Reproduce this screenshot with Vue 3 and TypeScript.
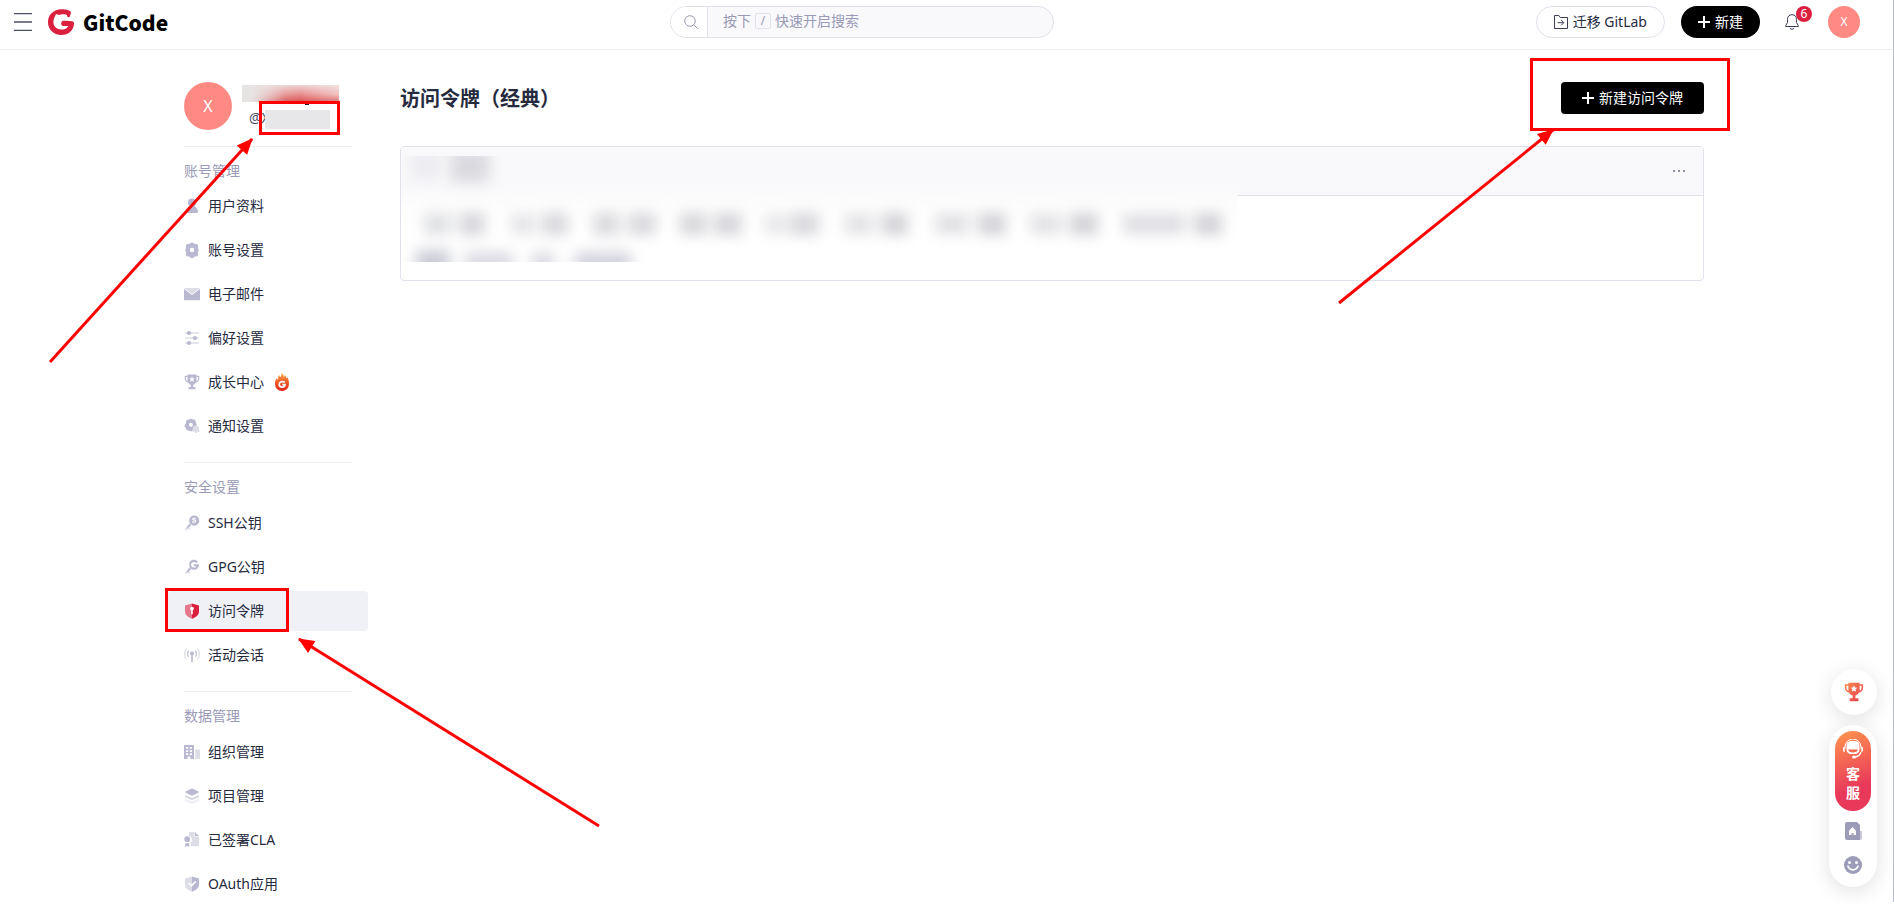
<script setup lang="ts">
import { ref } from 'vue'

interface Shape {
  d: string
  fill: string
}
interface NavItem {
  label: string
  icon: string
  active?: boolean
  hot?: boolean
}
interface NavGroup {
  title: string
  items: NavItem[]
}

const base = '#b8b8d0'
const soft = '#dddde8'

const dot = (cx: number, cy: number, r: number): string =>
  `M${cx - r} ${cy}a${r} ${r} 0 1 0 ${2 * r} 0a${r} ${r} 0 1 0 ${-2 * r} 0z`

const icons: Record<string, Shape[]> = {
  user: [
    { fill: base, d: dot(8, 4.5, 4) },
    { fill: base, d: 'M5.5 7.5h5c.3 1.6 3.6 2.600 3.600 6.100 0 .800-.5 1.400-1.300 1.400H3.200c-.8 0-1.300-.6-1.300-1.400 0-3.500 3.300-4.500 3.600-6.100z' },
  ],
  gear: [
    { fill: base, d: `M5.900 1.400C7 .100 9 .100 10.100 1.400l.5.600 1.500.1c1.500.2 2.400 1.700 2 3.200l-.3 1 .8 1.200c.3.600.3 1 0 1.600l-.8 1.200.3 1c.4 1.500-.5 3-2 3.200l-1.500.1-.5.600c-1.100 1.300-3.100 1.300-4.200 0l-.5-.600-1.500-.1c-1.500-.2-2.400-1.700-2-3.200l.3-1-.8-1.200c-.3-.600-.3-1 0-1.600l.8-1.200-.3-1c-.4-1.500.5-3 2-3.200l1.500-.1z${dot(8, 8, 2.3)}` },
  ],
  mail: [
    { fill: base, d: 'M0 3l8 6 8-6v10.500a.8.8 0 0 1-.8.8H.8a.8.8 0 0 1-.8-.8z' },
    { fill: soft, d: 'M.8 2h14.400c.4 0 .6.200.6.500L8 8.200.200 2.500C.200 2.200.4 2 .8 2z' },
  ],
  sliders: [
    { fill: soft, d: 'M1 2.200h14v1.600H1zM1 7.200h14v1.600H1zM1 12.200h14v1.600H1z' },
    { fill: base, d: dot(5, 3, 2.1) + dot(11, 8, 2.1) + dot(5, 13, 2.1) },
  ],
  cup: [
    { fill: base, d: 'M3.500.5h9v1.300h2.800v2.600c0 2.300-1.400 3.700-3.300 4-.7 1.300-1.700 2-2.900 2.300v2.200h2.400v2.400h-7v-2.400h2.400v-2.200C5.700 10.400 4.700 9.700 4 8.400 2.100 8.100.700 6.700.700 4.400V1.800h2.800zM1.900 3v1.400c0 1.300.5 2.200 1.600 2.500V3zM14.100 3v1.400c0 1.300-.5 2.200-1.600 2.500V3zM8 2.600l-.8 1.700-1.900.2 1.400 1.300-.4 1.900L8 6.800l1.700.9-.4-1.900 1.400-1.300-1.900-.2z' },
  ],
  notify: [
    { fill: base, d: `M5 1.500l1.500-.8h1l1.500.8 1.500-.1 1.300 2 .1 1.500 1 1.300-.5 1.500-3 1.200-1 4.400H6l-1-.9H3.500L2 11.500l.1-1.400L.600 8.900v-2l1.300-1.300V3.500L3.200 1.700z${dot(6.900, 6.800, 2)}` },
    { fill: soft, d: 'M12 7.500c2.100 0 3 1.500 3 3.200v1.600l.8 1.500H13.300a1.300 1.300 0 0 1-2.600 0H8.300l.8-1.500v-1.600c0-1.700.8-3.200 2.900-3.200z' },
  ],
  ssh: [
    { fill: base, d: `${dot(10.200, 5.600, 5.100)}M11.900 3.100c-1.600-.8-3.800-.4-3.700 1.100.1 1.700 2.900 1 2.900 2 0 .6-1.600.6-2.700-.1l-.4 1.100c1.700 1 4.300.7 4.300-1.100 0-1.900-2.900-1.200-2.900-2 0-.5 1.200-.5 2.100 0z` },
    { fill: base, d: 'M5.400 8.600l1.700 1.700-3.600 3.600-1.100-1.100z' },
    { fill: soft, d: 'M2.500 12.300l1.300 1.300-1.800 1.800-1.400-1.200zM4.800 12l1.600 1.500-1.300 1.300-1.500-1.500z' },
  ],
  gpg: [
    { fill: base, d: 'M13.900 2.700l-1.500 1.400C10 1.700 6.600 3.600 7.100 6.200c.5 2.600 4.200 3.200 5.500 1H9.800V5.300h5.100c.4 7.400-9.800 7.200-9.700.3C5.200.500 11-.8 13.900 2.700z' },
    { fill: base, d: 'M5.400 8.600l1.700 1.700-3.600 3.600-1.100-1.100z' },
    { fill: soft, d: 'M2.500 12.300l1.300 1.300-1.800 1.800-1.400-1.200zM4.800 12l1.600 1.500-1.300 1.300-1.500-1.500z' },
  ],
  token: [
    { fill: '#e6788c', d: 'M8 .4L1 2.600v6c0 3.400 3.300 5.900 7 7.200z' },
    { fill: '#d9203f', d: 'M8 .4l7 2.200v6c0 3.400-3.300 5.900-7 7.200z' },
    { fill: '#ffffff', d: dot(8, 5.6, 1.9) },
    { fill: '#ffffff', d: 'M7.200 6h1.600v5.300H7.200z' },
  ],
  signal: [
    { fill: base, d: dot(8, 6.5, 2) },
    { fill: base, d: 'M7.200 7h1.600v8.200H7.200z' },
    { fill: base, d: 'M4.300 3.200l.8.7c-1.300 1.500-1.300 4.200 0 5.700l-.8.7C2.600 8.300 2.600 5.200 4.300 3.200zM11.700 3.200l-.8.7c1.300 1.500 1.300 4.200 0 5.700l.8.7c1.700-2 1.700-5.100 0-7.100z' },
    { fill: soft, d: 'M2.100 1.400l.9.700C.800 4.500.800 9.500 3 11.900l-.9.700c-2.700-3-2.700-8.200 0-11.200zM13.900 1.400l-.9.700c2.200 2.400 2.200 7.400 0 9.800l.9.700c2.700-3 2.700-8.200 0-11.200z' },
  ],
  building: [
    { fill: base, d: 'M.8 1h8.400a.8.8 0 0 1 .8.8V15H6.500v-2.500h-3V15H0V1.800A.8.8 0 0 1 .8 1zM2 3v1.800h2.200V3zM5.800 3v1.800H8V3zM2 6.200V8h2.200V6.200zM5.800 6.200V8H8V6.200zM2 9.300v1.700h2.200V9.300zM5.800 9.300v1.700H8V9.300z' },
    { fill: soft, d: 'M11.200 5.500h4a.8.8 0 0 1 .8.8V15h-4.800z' },
  ],
  layers: [
    { fill: base, d: 'M8 .4l6.600 3c.5.2.5.8 0 1L8 7.700l-6.600-3.300c-.5-.2-.5-.8 0-1z' },
    { fill: '#cfcfe0', d: 'M1 7.200L8 10.300l7-3.100v1.700L8 12.100 1 8.900z' },
    { fill: '#e9e9f1', d: 'M1 10.800L8 13.900l7-3.100v1.700L8 15.700 1 12.500z' },
  ],
  cla: [
    { fill: soft, d: 'M5.500 0h5v4.800H15v8.700c0 .4-.3.700-.7.700H6.500V11A4 4 0 0 0 4.800 4z' },
    { fill: base, d: `M11 0l4 4.300h-4z${dot(3.200, 7.200, 2.900)}` },
    { fill: base, d: 'M1.200 11.200h4v3.900l-2-1.100-2 1.100z' },
  ],
  oauth: [
    { fill: soft, d: 'M8 .4L1 2.600v6c0 3.400 3.300 5.900 7 7.200z' },
    { fill: base, d: 'M8 .4l7 2.200v6c0 3.400-3.300 5.900-7 7.200z' },
    { fill: '#ffffff', d: 'M4.200 7.500l1.100-1.100 2.200 2.200 3.600-3.700 1.200 1.100-4.800 4.900z' },
  ],
}

const groups: NavGroup[] = [
  {
    title: '账号管理',
    items: [
      { label: '用户资料', icon: 'user' },
      { label: '账号设置', icon: 'gear' },
      { label: '电子邮件', icon: 'mail' },
      { label: '偏好设置', icon: 'sliders' },
      { label: '成长中心', icon: 'cup', hot: true },
      { label: '通知设置', icon: 'notify' },
    ],
  },
  {
    title: '安全设置',
    items: [
      { label: 'SSH公钥', icon: 'ssh' },
      { label: 'GPG公钥', icon: 'gpg' },
      { label: '访问令牌', icon: 'token', active: true },
      { label: '活动会话', icon: 'signal' },
    ],
  },
  {
    title: '数据管理',
    items: [
      { label: '组织管理', icon: 'building' },
      { label: '项目管理', icon: 'layers' },
      { label: '已签署CLA', icon: 'cla' },
      { label: 'OAuth应用', icon: 'oauth' },
    ],
  },
]

// Smudges of the obscured token details: x, y, width, height, colour
const smudges: [number, number, number, number, string][] = [
  [10, -6, 30, 30, '#ececf1'], [50, -6, 38, 32, '#d9d9df'],
  [23, 57, 27, 22, '#e0e1e4'], [58, 57, 26, 22, '#d6d6db'],
  [110, 58, 24, 20, '#e4e4e8'], [141, 57, 26, 22, '#d8d8dd'],
  [192, 57, 27, 22, '#dadade'], [227, 57, 28, 22, '#d9d9de'],
  [279, 57, 27, 22, '#d7d7db'], [313, 57, 28, 22, '#d6d6db'],
  [364, 58, 21, 20, '#e6e6e9'], [389, 57, 29, 22, '#d8d8dd'],
  [443, 58, 30, 20, '#e2e2e5'], [481, 57, 26, 22, '#d3d3d8'],
  [534, 58, 34, 20, '#e0e0e4'], [577, 57, 28, 22, '#d3d3d8'],
  [629, 58, 32, 20, '#e2e2e5'], [669, 57, 28, 22, '#d3d3d8'],
  [722, 58, 62, 20, '#dedee3'], [793, 57, 28, 22, '#d3d3d8'],
  [15, 94, 34, 26, '#cbcdd6'], [64, 96, 48, 24, '#dbdbe3'],
  [131, 96, 22, 24, '#dbdbe3'], [174, 96, 56, 24, '#d3d3dd'],
]

// Red guide arrows: tail x/y, tip x/y
const arrows = [
  [50, 362, 252, 139],
  [1339, 303, 1553, 130],
  [599, 826, 299, 639],
]

const keyword = ref('')
</script>

<template>
  <div class="page">
    <header class="topbar">
      <div class="brand">
        <button class="plain menu" aria-label="菜单">
          <svg width="18" height="18" viewBox="0 0 18 18">
            <path d="M0 .5h18M0 9h18M0 17.500h18" stroke="#4e5068" stroke-width="1.300" />
          </svg>
        </button>
        <a class="logo" href="#">
          <svg width="26" height="26" viewBox="0 0 26 26">
            <path
              d="M13.500.200C17 .100 22 1 22.700 2.700c.6 1.600-.3 3.200-.9 4.700-.6 1.400-2.500 1.100-2.700-.3-.1-1-.7-1.500-1.600-1.500-2.600-.8-4.700-.4-6.500.4-2.200-1.200-3.800-.700-3.600.8C5 10 4.700 14.600 6.800 17.600c2.600 3.600 8.700 3.800 12 1.300.8-.6 1.200-1.200 1.200-1.900h-4.800c-2.700 0-2.700-5 0-5.200 3.100-.2 6.300-.100 9 .500 1.400.4 2 1.500 1.800 3C25.400 21.500 20.500 26 13.400 26 5.500 26 0 20.600 0 13.300 0 5.500 5.600.400 13.500.200z"
              fill="#da203e"
            />
          </svg>
          <span>GitCode</span>
        </a>
      </div>

      <label class="search">
        <span class="search-icon">
          <svg width="14" height="14" viewBox="0 0 14 14" fill="none" stroke="#9a9ab2">
            <circle cx="6" cy="6" r="5.300" />
            <path d="M9.800 9.800l3.800 3.800" />
          </svg>
        </span>
        <input v-model="keyword" type="text" aria-label="搜索" />
        <span v-if="!keyword" class="hint">按下<kbd>/</kbd>快速开启搜索</span>
      </label>

      <div class="actions">
        <button class="pill outline">
          <svg width="14" height="14" viewBox="0 0 14 14" fill="none" stroke="#3b3d55">
            <path d="M.5 13.500V.500h4.300l1.500 2h7.200v11z" />
            <path d="M3.500 7.700h6M7.200 5l2.600 2.700-2.600 2.700" />
          </svg>
          迁移 GitLab
        </button>
        <button class="pill solid">
          <svg width="12" height="12" viewBox="0 0 12 12"><path d="M6 0v12M0 6h12" stroke="#fff" stroke-width="2" /></svg>
          新建
        </button>
        <button class="plain bell" aria-label="通知">
          <svg width="14" height="16" viewBox="0 0 14 16" fill="none" stroke="#3b3d55">
            <path d="M7 .700c-3 0-4.500 2-4.500 4.600v3.200L.700 11.700v.8h12.600v-.8l-1.800-3.200V5.300C11.500 2.700 10 .700 7 .700zM4.800 14.200c1.300 1.300 3.100 1.300 4.400 0" />
          </svg>
          <span class="badge">6</span>
        </button>
        <a class="avatar small" href="#">X</a>
      </div>
    </header>

    <div class="scroll">
      <div class="container">
        <aside class="sidebar">
          <div class="profile">
            <a class="avatar" href="#">X</a>
            <div class="who">
              <span class="who-name"></span>
              <span class="who-id">@X<i></i></span>
            </div>
          </div>
          <nav v-for="g in groups" :key="g.title" class="group" :aria-label="g.title">
            <h2>{{ g.title }}</h2>
            <a v-for="i in g.items" :key="i.label" href="#" class="item" :class="{ active: i.active }">
              <svg width="16" height="16" viewBox="0 0 16 16">
                <path v-for="(s, n) in icons[i.icon]" :key="n" :d="s.d" :fill="s.fill" fill-rule="evenodd" />
              </svg>
              <span>{{ i.label }}</span>
              <svg v-if="i.hot" class="hot" width="18" height="18" viewBox="0 0 18 18">
                <defs>
                  <linearGradient id="flame" x1="0" y1="0" x2="0" y2="1">
                    <stop offset="0" stop-color="#f9b24c" />
                    <stop offset=".45" stop-color="#f0602a" />
                    <stop offset="1" stop-color="#e2231a" />
                  </linearGradient>
                </defs>
                <path
                  d="M8.200 0c2.500 1.200 2.600 2.600 2.500 3.900.8-.3 1-1 1-1.900 1.300.8 1.600 2.200 1.500 3.400.6-.2.900-.7 1-1.300 1.300 2 1.800 4.400 1.800 6.700A7 7 0 0 1 9 18a7 7 0 0 1-7-7.200c0-2.500.7-4.300 2-5.900.1 1 .4 1.500 1.100 1.800C4.900 4.500 5.300 2.900 6.600 2c0 1 .2 1.600.8 2C8.600 2.800 8.700 1.300 8.200 0z"
                  fill="url(#flame)"
                />
                <path d="M11.800 9.400C9.700 7.700 6.200 8.800 6.200 11.500c0 3.300 5.800 3.500 5.800.2H9.300" fill="none" stroke="#fff" stroke-width="1.700" />
              </svg>
            </a>
          </nav>
        </aside>

        <main class="main">
          <div class="title-row">
            <h1>访问令牌（经典）</h1>
            <button class="create">
              <svg width="12" height="12" viewBox="0 0 12 12"><path d="M6 0v12M0 6h12" stroke="#fff" stroke-width="2" /></svg>
              新建访问令牌
            </button>
          </div>
          <section class="card">
            <div class="card-head">
              <button class="plain more" aria-label="更多">
                <svg width="12" height="2" viewBox="0 0 12 2"><path d="M0 0h2v2H0zM5 0h2v2H5zM10 0h2v2h-2z" fill="#8f90a6" /></svg>
              </button>
            </div>
            <div class="card-body"></div>
            <div class="veil">
              <svg width="837" height="106" viewBox="0 0 837 106">
                <g class="smudges">
                  <rect v-for="(s, n) in smudges" :key="n" :x="s[0]" :y="s[1]" :width="s[2]" :height="s[3]" :fill="s[4]" />
                </g>
              </svg>
            </div>
          </section>
        </main>
      </div>
    </div>

    <div class="dock">
      <button class="round" aria-label="奖杯">
        <svg width="20" height="20" viewBox="0 0 16 16">
          <defs>
            <linearGradient id="warm" x1="0" y1="0" x2="1" y2="1">
              <stop offset="0" stop-color="#fb8a4a" />
              <stop offset="1" stop-color="#e53b50" />
            </linearGradient>
          </defs>
          <path :d="icons.cup[0].d" fill="url(#warm)" fill-rule="evenodd" />
        </svg>
      </button>
      <div class="stack">
        <button class="service">
          <svg width="20" height="20" viewBox="0 0 20 20">
            <path d="M2 10V8a8 8 0 0 1 16 0v2" fill="none" stroke="#fff" />
            <path d="M1.700 7.500v5.500C.600 13 0 12.200 0 11.200V9.300c0-1 .6-1.800 1.700-1.800zM18.300 7.500v5.500c1.100 0 1.700-.8 1.700-1.800V9.300c0-1-.6-1.800-1.700-1.800z" fill="#fff" />
            <rect x="3.500" y="2" width="13" height="13" rx="4.500" fill="#fff" />
            <path d="M5.200 10.500h9.600c0 4-9.600 4-9.600 0z" fill="#f3694f" />
            <path d="M18 13c-.7 3-3.500 4.700-6.500 5" fill="none" stroke="#fff" stroke-width="1.300" />
            <ellipse cx="11" cy="18" rx="2" ry="1.500" fill="#fff" />
          </svg>
          <span>客</span>
          <span>服</span>
        </button>
        <button class="plain" aria-label="文档">
          <svg width="18" height="18" viewBox="0 0 18 18">
            <path d="M14 9h4v7a2 2 0 0 1-2 2h-2z" fill="#c9c9d9" />
            <path d="M3 0h10l3 3v15H3a2 2 0 0 1-2-2V2a2 2 0 0 1 2-2z" fill="#9c9cb8" />
            <path d="M8.500 5l3.500 3.800V13H9.500v-2H7.500v2H5V8.800z" fill="#fff" />
          </svg>
        </button>
        <button class="plain" aria-label="反馈">
          <svg width="18" height="18" viewBox="0 0 18 18">
            <circle cx="9" cy="9" r="9" fill="#9c9cb8" />
            <circle cx="5.500" cy="6.500" r="1.500" fill="#fff" />
            <circle cx="12.500" cy="6.500" r="1.500" fill="#fff" />
            <path d="M4 10.300c1.700 4.700 8.300 4.700 10 0" fill="none" stroke="#fff" stroke-width="1.800" stroke-linecap="round" />
          </svg>
        </button>
      </div>
    </div>

    <svg class="guides" width="1894" height="904" viewBox="0 0 1894 904" fill="none" stroke="#fe0000" stroke-width="3">
      <defs>
        <marker id="head" viewBox="0 0 18 16" refX="16" refY="8" markerWidth="18" markerHeight="16" markerUnits="userSpaceOnUse" orient="auto">
          <path d="M1 1l16 7-16 7z" fill="#fe0000" stroke="none" />
        </marker>
      </defs>
      <rect x="260.500" y="102.500" width="78" height="31" />
      <rect x="1531.500" y="59.500" width="197" height="70" />
      <rect x="166.500" y="589.500" width="121" height="41" />
      <line v-for="(a, n) in arrows" :key="n" :x1="a[0]" :y1="a[1]" :x2="a[2]" :y2="a[3]" marker-end="url(#head)" />
    </svg>
  </div>
</template>

<style>
body {
  margin: 0;
  overflow: hidden;
}
</style>

<style scoped>
.page {
  position: relative;
  display: flex;
  flex-direction: column;
  height: 100vh;
  overflow: hidden;
  background: #fff;
  color: #262a3e;
  font: 14px/20px "Noto Sans", "Noto Sans CJK SC", sans-serif;
}
.page::after {
  content: "";
  position: absolute;
  top: 0;
  right: 0;
  bottom: 2px;
  width: 1px;
  background: #bcbcd0;
}
button,
input {
  font: inherit;
  color: inherit;
}
a {
  color: inherit;
  text-decoration: none;
}
svg {
  display: block;
  flex: none;
}
.plain {
  display: flex;
  align-items: center;
  padding: 0;
  border: 0;
  background: none;
}
.topbar {
  display: flex;
  align-items: center;
  justify-content: space-between;
  flex: none;
  height: 49px;
  box-sizing: border-box;
  padding: 6px 34px 11px 14px;
  box-shadow: 0 1px 0 #f0f0f3;
}
.brand {
  display: flex;
  align-items: center;
  gap: 16px;
  padding-right: 20px;
}
.logo {
  display: flex;
  align-items: center;
  gap: 9px;
  color: #000;
  font: 900 21px/26px "Noto Sans CJK SC", sans-serif;
}
.search {
  position: relative;
  display: flex;
  width: 384px;
  height: 32px;
  box-sizing: border-box;
  border: 1px solid #e1e1ec;
  border-radius: 16px;
  overflow: hidden;
  background: #f9f9fb;
}
.search-icon {
  display: flex;
  align-items: center;
  justify-content: center;
  width: 37px;
  padding-left: 4px;
  box-sizing: border-box;
  border-right: 1px solid #e1e1ec;
  background: #fff;
  flex: none;
}
.search input {
  flex: 1;
  min-width: 0;
  padding: 0 15px;
  border: 0;
  outline: 0;
  background: transparent;
}
.hint {
  position: absolute;
  left: 52px;
  top: 3px;
  display: flex;
  align-items: center;
  gap: 4px;
  color: #9a9ab6;
  line-height: 22px;
  pointer-events: none;
}
.hint kbd {
  width: 14px;
  height: 14px;
  border: 1px solid #e1e1ec;
  border-radius: 2px;
  font: 12px/14px "Noto Sans", sans-serif;
  text-align: center;
}
.actions {
  display: flex;
  align-items: center;
}
.pill {
  display: flex;
  align-items: center;
  height: 32px;
  border-radius: 16px;
  box-sizing: border-box;
}
.outline {
  gap: 5px;
  padding: 0 17px;
  border: 1px solid #e1e1ec;
  background: #fff;
  margin-right: 16px;
}
.solid {
  gap: 5px;
  padding: 0 17px;
  border: 0;
  background: #000;
  color: #fff;
  margin-right: 25px;
}
.bell {
  position: relative;
  margin-right: 29px;
}
.badge {
  position: absolute;
  left: 11px;
  top: -8px;
  width: 16px;
  border-radius: 8px;
  background: #da203e;
  color: #fff;
  font-size: 12px;
  line-height: 16px;
  text-align: center;
}
.avatar {
  width: 48px;
  border-radius: 24px;
  background: #ff8a84;
  color: #fff;
  font-size: 16px;
  line-height: 48px;
  text-align: center;
  flex: none;
}
.avatar.small {
  width: 32px;
  border-radius: 16px;
  font-size: 12px;
  line-height: 32px;
}
.scroll {
  flex: 1;
  min-height: 0;
  padding-right: 6px;
  overflow-y: auto;
  scrollbar-width: none;
}
.container {
  display: flex;
  gap: 32px;
  max-width: 1520px;
  margin: 0 auto;
  padding: 33px 0 24px;
}
.sidebar {
  width: 184px;
  flex: none;
}
.profile {
  display: flex;
  gap: 10px;
  margin-bottom: 16px;
}
.who {
  display: flex;
  flex-direction: column;
  padding-top: 3px;
}
.who-name {
  position: relative;
  width: 97px;
  height: 17px;
  background:
    linear-gradient(90deg, #e6e4e3 10%, rgba(230, 228, 227, 0) 45%),
    linear-gradient(180deg, rgba(240, 225, 225, 0.9), rgba(236, 170, 170, 0.6) 55%, rgba(214, 80, 80, 0.75)),
    linear-gradient(90deg, #e6e4e3, #e06060 60%, #fbe4e4);
}
.who-name::after {
  content: "";
  position: absolute;
  left: 63px;
  top: 18px;
  width: 4px;
  height: 2px;
  background: #1c1e2c;
}
.who-id {
  display: flex;
  padding: 6px 0 0 7px;
  color: #4e5068;
}
.who-id i {
  width: 65px;
  height: 19px;
  margin: 2px 0 0 -5px;
  background: #e7e7ea;
}
.group {
  width: 168px;
  padding: 12px 0 16px;
  border-top: 1px solid #f0f0f5;
}
.group h2 {
  margin: 0 0 4px;
  color: #9a9ab6;
  font-size: 14px;
  font-weight: 400;
  line-height: 23px;
}
.group + .group h2 {
  line-height: 24px;
}
.item {
  display: flex;
  align-items: center;
  gap: 8px;
  width: 200px;
  height: 40px;
  margin-left: -16px;
  padding-left: 16px;
  box-sizing: border-box;
  border-radius: 4px;
}
.item + .item {
  margin-top: 4px;
}
.item.active {
  background: #f0f1f6;
}
.hot {
  margin-left: 1px;
}
.main {
  flex: 1;
  min-width: 0;
}
.title-row {
  display: flex;
  align-items: center;
  justify-content: space-between;
  height: 32px;
  margin-bottom: 32px;
}
h1 {
  margin: 0;
  padding-top: 2px;
  font-size: 20px;
  line-height: 32px;
}
.create {
  display: flex;
  align-items: center;
  gap: 5px;
  height: 32px;
  padding: 0 21px;
  border: 0;
  border-radius: 4px;
  background: #000;
  color: #fff;
}
.card {
  position: relative;
  border: 1px solid #e1e1ec;
  border-radius: 4px;
  overflow: hidden;
}
.card-head {
  display: flex;
  align-items: center;
  justify-content: flex-end;
  height: 48px;
  padding-right: 18px;
  border-bottom: 1px solid #e1e1ec;
  background: #f9f9fb;
}
.card-body {
  height: 84px;
}
.veil {
  position: absolute;
  left: 0;
  top: 9px;
  height: 106px;
  max-width: 100%;
  overflow: hidden;
  background: linear-gradient(#f9f9fb 30px, #fbfbfc 42px, #fdfdfd 50px, #fff 70px);
}
.smudges {
  filter: blur(7px);
}
.dock {
  position: absolute;
  right: 17px;
  bottom: 17px;
  display: flex;
  flex-direction: column;
  align-items: flex-end;
  gap: 10px;
}
.round {
  display: flex;
  align-items: center;
  justify-content: center;
  width: 46px;
  height: 46px;
  padding: 0;
  border: 0;
  border-radius: 23px;
  background: #fff;
  box-shadow: 0 4px 20px rgba(0, 0, 0, 0.12);
}
.stack {
  display: flex;
  flex-direction: column;
  align-items: center;
  gap: 16px;
  width: 48px;
  padding: 6px 0 13px;
  box-sizing: border-box;
  border-radius: 24px;
  background: #fff;
  box-shadow: 0 4px 20px rgba(0, 0, 0, 0.12);
}
.stack .service {
  display: flex;
  flex-direction: column;
  align-items: center;
  width: 36px;
  height: 80px;
  padding: 8px 0 0;
  margin-bottom: -5px;
  border: 0;
  border-radius: 18px;
  background: linear-gradient(160deg, #ff8f4e 5%, #e8395b 70%);
  color: #fff;
  font-weight: 700;
  line-height: 19px;
}
.service svg {
  margin-bottom: 5px;
}
.guides {
  position: absolute;
  left: 0;
  top: 0;
  pointer-events: none;
}
</style>
